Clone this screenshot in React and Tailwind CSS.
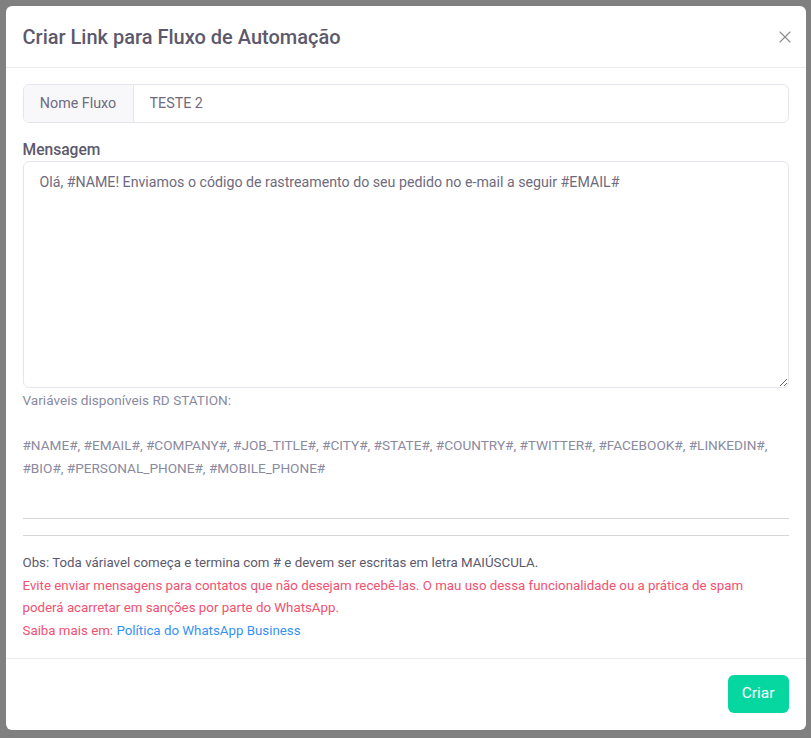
import { X } from "lucide-react";

const vars = [
  "#NAME#", "#EMAIL#", "#COMPANY#", "#JOB_TITLE#", "#CITY#", "#STATE#", "#COUNTRY#",
  "#TWITTER#", "#FACEBOOK#", "#LINKEDIN#", "#BIO#", "#PERSONAL_PHONE#", "#MOBILE_PHONE#",
];

export default function App() {
  return (
    <div
      className="min-h-[738px] bg-[#808080] pt-[6px] pb-[7px]"
      style={{ fontFamily: "Roboto, 'Liberation Sans', sans-serif" }}
    >
      <div className="mx-auto w-[800px] bg-white rounded-md flex flex-col">
        {/* header */}
        <div className="flex items-center justify-between h-[62px] px-[17px] border-b border-[#ebebf0]">
          <h5 className="text-[20px] font-medium text-[#5d596c]">
            Criar Link para Fluxo de Automação
          </h5>
          <button className="text-[#8a8a8a] -mr-[6px]">
            <X className="w-5 h-5" strokeWidth={1.3} />
          </button>
        </div>

        {/* body */}
        <div className="px-[17px] pt-[16px] pb-[16px]">
          <div className="flex h-[39px] border border-[#e4e5ee] rounded-md text-[14.3px]">
            <span className="w-[110px] flex items-center justify-center bg-[#f8f8fb] border-r border-[#e4e5ee] rounded-l-md text-[#6f6b7d]">
              Nome Fluxo
            </span>
            <input
              className="flex-1 px-4 outline-none text-[#6f6b7d] bg-transparent"
              defaultValue="TESTE 2"
            />
          </div>

          <label className="block mt-[17px] mb-[1px] text-[15.6px] leading-[20px] font-medium text-[#5d596c]">
            Mensagem
          </label>
          <textarea
            className="block w-full h-[227px] border border-[#e4e5ee] rounded-md px-4 pt-[10px] pb-[8px] text-[14.2px] text-[#6f6b7d] outline-none"
            defaultValue="Olá, #NAME! Enviamos o código de rastreamento do seu pedido no e-mail a seguir #EMAIL#"
          />

          <div className="mt-[1px] text-[13.6px] leading-[23px] text-[#8a8aa0]">
            <p>Variáveis disponíveis RD STATION:</p>
            <p className="mt-[22px]">{vars.join(", ")}</p>
          </div>

          <hr className="mt-[38px] border-0 border-t border-[#d6d6d6]" />
          <hr className="mt-[16px] border-0 border-t border-[#d6d6d6]" />

          <div className="mt-[16px] text-[13.3px] leading-[22.5px]">
            <p className="text-[#5d596c]">
              Obs: Toda váriavel começa e termina com # e devem ser escritas em letra MAIÚSCULA.
            </p>
            <p className="text-[#f2516f]">
              Evite enviar mensagens para contatos que não desejam recebê-las. O mau uso dessa funcionalidade ou a prática de spam
              <br />
              poderá acarretar em sanções por parte do WhatsApp.
            </p>
            <p className="text-[#f2516f]">
              Saiba mais em: <a className="text-[#3592f5]">Política do WhatsApp Business</a>
            </p>
          </div>
        </div>

        {/* footer */}
        <div className="flex justify-end px-[17px] pt-[16px] pb-[17px] border-t border-[#ebebf0]">
          <button className="h-[38px] px-[14px] rounded-md bg-[#06d6a0] text-white text-[15.5px]">
            Criar
          </button>
        </div>
      </div>
    </div>
  );
}
